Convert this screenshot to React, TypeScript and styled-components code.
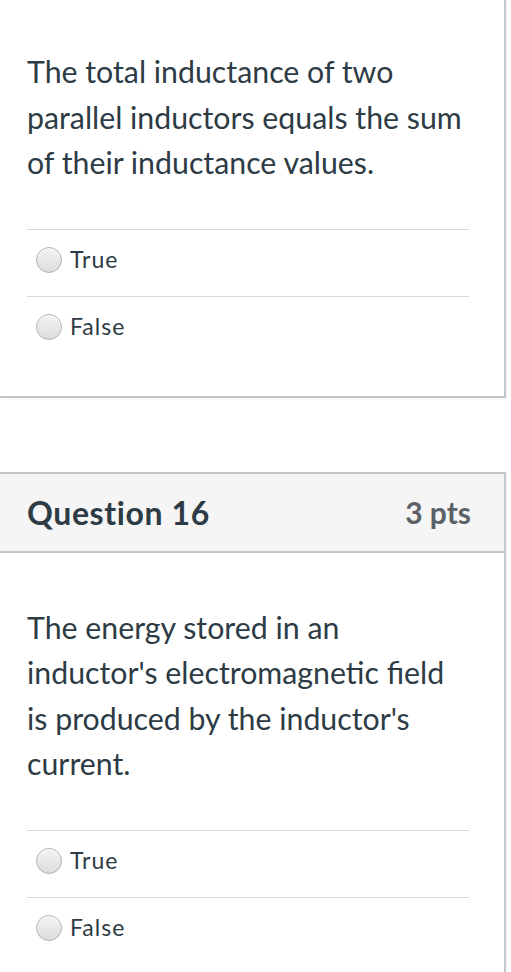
import React from "react";
import styled, { createGlobalStyle } from "styled-components";

const Global = createGlobalStyle`
  html, body { margin: 0; padding: 0; background: #ffffff; }
  body { font-family: Lato, "Noto Sans", sans-serif; color: #2d3b45; }
`;

const Page = styled.div`
  width: 511px;
  overflow: hidden;
`;

const Card = styled.div<{ $cutTop?: boolean; $gapTop?: number }>`
  width: 504px;
  margin-top: ${(p) => p.$gapTop ?? 0}px;
  border: 2px solid #c3c7ca;
  border-left: none;
  ${(p) => (p.$cutTop ? "border-top: none;" : "")}
  background: #fff;
  box-shadow: 1px 1px 2px rgba(0, 0, 0, 0.06);
`;

const Header = styled.div`
  height: 77px;
  display: flex;
  align-items: center;
  justify-content: space-between;
  padding: 0 33px 0 27px;
  background: #f5f5f5;
  border-bottom: 2px solid #c3c7ca;
`;

const Title = styled.div`
  font-size: 32px;
  font-weight: 700;
  color: #2d3b45;
  letter-spacing: 0.6px;
`;

const Points = styled.div`
  font-size: 30px;
  font-weight: 700;
  color: #5b6166;
`;

const Body = styled.div<{ $top: number }>`
  padding: ${(p) => p.$top}px 35px 33px 27px;
`;

const QuestionText = styled.p`
  margin: 0 0 43px 0;
  font-size: 30.3px;
  line-height: 45.5px;
  color: #2d3b45;
`;

const Answers = styled.div`
  display: flex;
  flex-direction: column;
`;

const AnswerRow = styled.label`
  height: 66px;
  box-sizing: content-box;
  border-top: 1px solid #d8dadc;
  display: flex;
  align-items: center;
  padding-left: 9px;
  font-size: 23px;
  letter-spacing: 1px;
  color: #2d3b45;
`;

const AnswerInner = styled.div`
  display: flex;
  align-items: center;
  gap: 8px;
  margin-top: -7px;
`;

const Radio = styled.span`
  width: 24px;
  height: 24px;
  border-radius: 50%;
  border: 1px solid #b3b3b3;
  background: linear-gradient(#f4f4f4, #dcdcdc);
  box-shadow: inset 0 1px 1px rgba(255, 255, 255, 0.8);
  flex: none;
  margin-top: 2px;
`;

const Question = ({ text, options }: { text: string; options: string[] }) => (
  <>
    <QuestionText>{text}</QuestionText>
    <Answers>
      {options.map((o) => (
        <AnswerRow key={o}>
          <AnswerInner>
            <Radio />
            <span>{o}</span>
          </AnswerInner>
        </AnswerRow>
      ))}
    </Answers>
  </>
);

export default function App() {
  return (
    <Page>
      <Global />
      <Card $cutTop>
        <Body $top={49}>
          <Question
            text="The total inductance of two parallel inductors equals the sum of their inductance values."
            options={["True", "False"]}
          />
        </Body>
      </Card>
      <Card $gapTop={74}>
        <Header>
          <Title>Question 16</Title>
          <Points>3 pts</Points>
        </Header>
        <Body $top={52}>
          <Question
            text="The energy stored in an inductor's electromagnetic field is produced by the inductor's current."
            options={["True", "False"]}
          />
        </Body>
      </Card>
    </Page>
  );
}
